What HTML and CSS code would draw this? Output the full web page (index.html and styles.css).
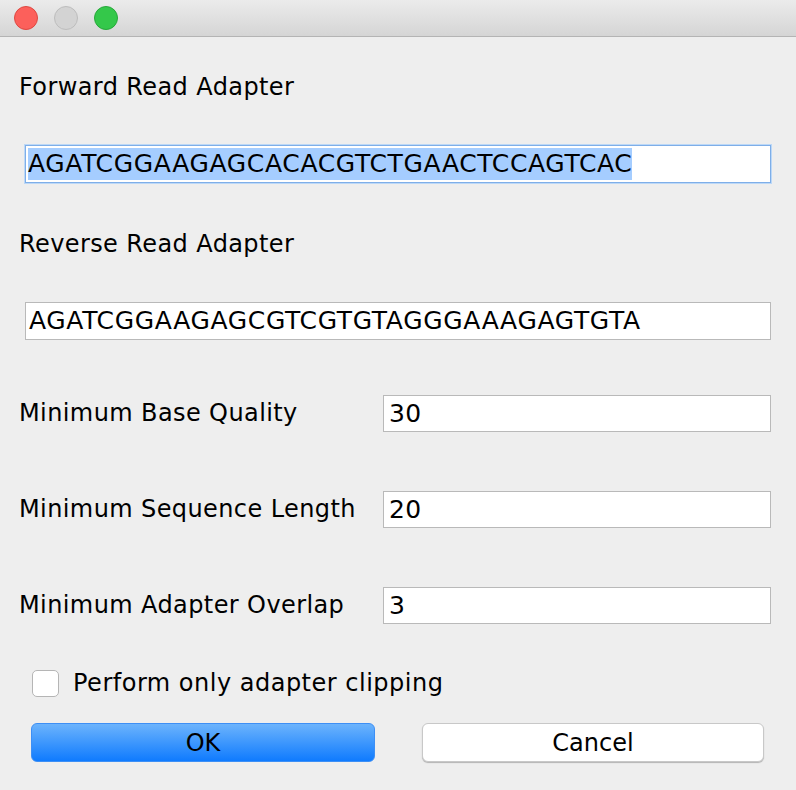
FILE: index.html
```html
<!DOCTYPE html>
<html>
<head>
<meta charset="utf-8">
<link rel="stylesheet" href="styles.css">
</head>
<body>
<div class="window">
  <div class="titlebar">
    <span class="light red"></span>
    <span class="light gray"></span>
    <span class="light green"></span>
  </div>
  <div class="content">
    <div class="label label-first">Forward Read Adapter</div>
    <div class="field field-wide focused"><span class="sel">AGATCGGAAGAGCACACGTCTGAACTCCAGTCAC</span></div>
    <div class="label label-second">Reverse Read Adapter</div>
    <div class="field field-wide">AGATCGGAAGAGCGTCGTGTAGGGAAAGAGTGTA</div>
    <div class="row row-first">
      <div class="row-label">Minimum Base Quality</div>
      <div class="field field-short">30</div>
    </div>
    <div class="row">
      <div class="row-label">Minimum Sequence Length</div>
      <div class="field field-short">20</div>
    </div>
    <div class="row">
      <div class="row-label">Minimum Adapter Overlap</div>
      <div class="field field-short">3</div>
    </div>
    <div class="check-row">
      <span class="checkbox"></span>
      <span class="check-label">Perform only adapter clipping</span>
    </div>
    <div class="buttons">
      <div class="btn btn-ok">OK</div>
      <div class="btn btn-cancel">Cancel</div>
    </div>
  </div>
</div>
</body>
</html>
```
FILE: styles.css
```css
html, body {
  margin: 0;
  padding: 0;
  background: #eeeeee;
}
.window {
  width: 796px;
  height: 790px;
  background: #eeeeee;
  font-family: "DejaVu Sans", "Liberation Sans", sans-serif;
  color: #000;
  overflow: hidden;
}
.titlebar {
  height: 36px;
  border-bottom: 1px solid #b4b4b4;
  background: linear-gradient(#ebebeb, #d5d5d5);
  display: flex;
  align-items: center;
  padding-left: 14px;
  gap: 16px;
  box-sizing: content-box;
}
.light {
  width: 22px;
  height: 22px;
  border-radius: 50%;
  display: block;
}
.red { background: #fc605b; border: 1px solid #de4841; }
.gray { background: #d3d3d3; border: 1px solid #bdbdbd; }
.green { background: #34c84a; border: 1px solid #27a83a; }
.content {
  padding: 0 25px 0 19px;
  display: flex;
  flex-direction: column;
}
.label {
  font-size: 24px;
  height: 30px;
  line-height: 30px;
  letter-spacing: 0.4px;
}
.label-first { margin-top: 35px; }
.label-second { margin-top: 46px; }
.field {
  box-sizing: border-box;
  height: 38px;
  background: #fff;
  border: 1px solid #b9b9b9;
  font-size: 25px;
  line-height: 36px;
  padding-left: 3px;
  white-space: nowrap;
  overflow: hidden;
  letter-spacing: 0.4px;
}
.field-wide {
  margin-left: 6px;
  width: 746px;
  margin-top: 43px;
  letter-spacing: 0.65px;
}
.field-wide.focused {
  border: 1px solid #7eaee8;
  box-shadow: 0 0 0 1px #bcd8f7;
  padding-left: 2px;
  padding-top: 2px;
  line-height: 32px;
}
.sel {
  background: #a5cdff;
  display: inline-block;
  line-height: 32px;
  height: 32px;
}
.row {
  display: flex;
  align-items: center;
  margin-top: 58px;
  height: 38px;
}
.row-first { margin-top: 54px; }
.row-label {
  width: 364px;
  font-size: 24px;
  letter-spacing: 0.4px;
}
.field-short {
  width: 388px;
  height: 37px;
  line-height: 35px;
  padding-left: 5px;
}
.check-row {
  display: flex;
  align-items: center;
  margin-top: 45px;
  margin-left: 13px;
  height: 28px;
}
.checkbox {
  box-sizing: border-box;
  width: 27px;
  height: 27px;
  border: 1px solid #b5b5b5;
  border-radius: 5px;
  background: #fff;
  display: block;
}
.check-label {
  font-size: 24px;
  margin-left: 14px;
  letter-spacing: 0.5px;
}
.buttons {
  display: flex;
  margin-top: 26px;
  margin-left: 12px;
  gap: 47px;
}
.btn {
  box-sizing: border-box;
  height: 39px;
  border-radius: 6px;
  font-size: 24px;
  line-height: 38px;
  text-align: center;
}
.btn-ok {
  width: 344px;
  background: linear-gradient(#6cb3fc, #0f7bfe);
  border: 1px solid #3d8ff5;
}
.btn-cancel {
  width: 342px;
  background: #fff;
  border: 1px solid #c8c8c8;
  box-shadow: 0 1px 1px rgba(0,0,0,0.25);
}
```
